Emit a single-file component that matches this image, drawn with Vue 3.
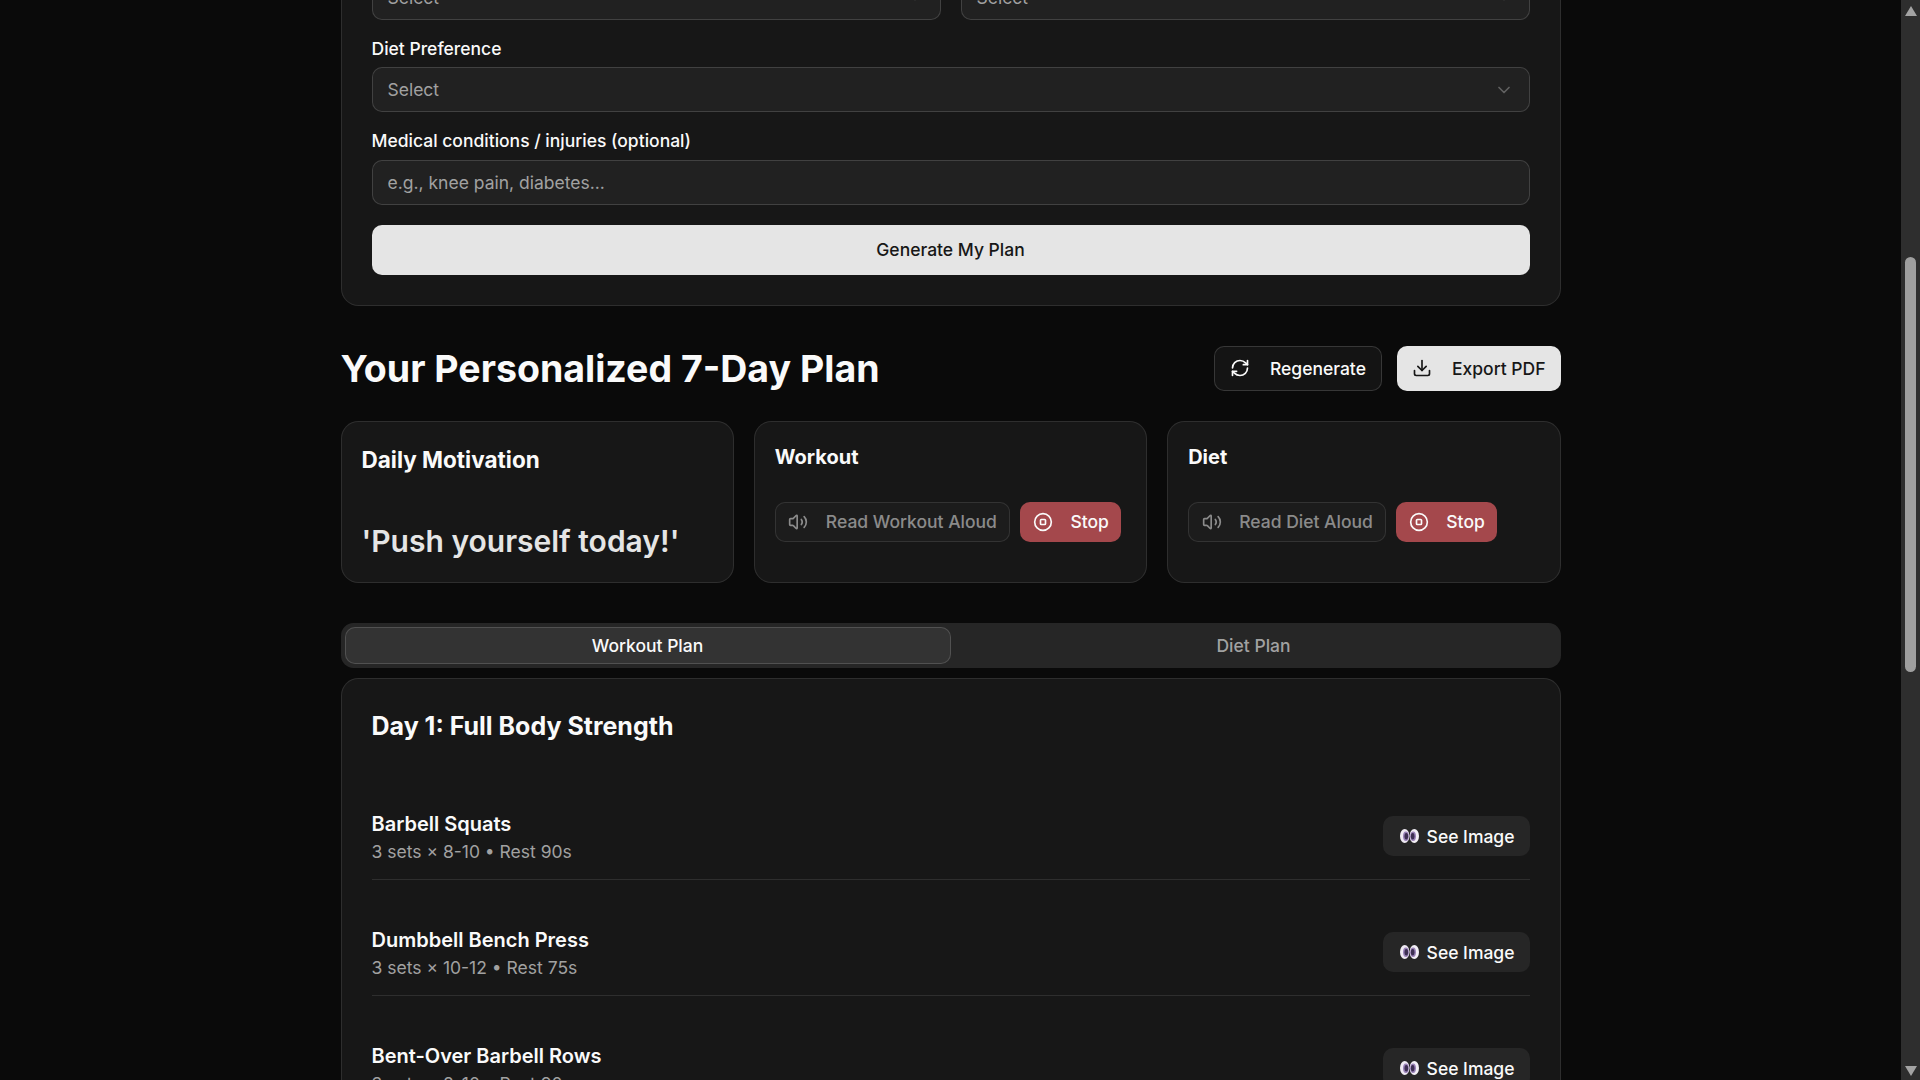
<script setup>
const exercises = [
  { name: 'Barbell Squats', detail: '3 sets × 8-10 • Rest 90s' },
  { name: 'Dumbbell Bench Press', detail: '3 sets × 10-12 • Rest 75s' },
  { name: 'Bent-Over Barbell Rows', detail: '3 sets × 8-10 • Rest 90s' },
]

const speakers = [
  { title: 'Workout', label: 'Read Workout Aloud' },
  { title: 'Diet', label: 'Read Diet Aloud' },
]
</script>

<template>
  <div class="window">
    <main class="page">
      <div class="container">
        <section class="card form-card">
          <div class="form-row">
            <div class="select"><span>Select</span>
              <svg class="chevron" viewBox="0 0 24 24"><path d="m6 9 6 6 6-6" /></svg>
            </div>
            <div class="select"><span>Select</span>
              <svg class="chevron" viewBox="0 0 24 24"><path d="m6 9 6 6 6-6" /></svg>
            </div>
          </div>

          <div class="field">
            <label class="label">Diet Preference</label>
            <div class="select"><span>Select</span>
              <svg class="chevron" viewBox="0 0 24 24"><path d="m6 9 6 6 6-6" /></svg>
            </div>
          </div>

          <div class="field">
            <label class="label">Medical conditions / injuries (optional)</label>
            <input class="input" type="text" placeholder="e.g., knee pain, diabetes..." />
          </div>

          <button class="btn-generate" type="button">Generate My Plan</button>
        </section>

        <div class="plan-head">
          <h1 class="plan-title">Your Personalized 7-Day Plan</h1>
          <div class="plan-actions">
            <button class="btn btn-outline" type="button">
              <svg class="icon" viewBox="0 0 24 24">
                <path d="M3 12a9 9 0 0 1 9-9 9.75 9.75 0 0 1 6.74 2.74L21 8" />
                <path d="M21 3v5h-5" />
                <path d="M21 12a9 9 0 0 1-9 9 9.75 9.75 0 0 1-6.74-2.74L3 16" />
                <path d="M8 16H3v5" />
              </svg>
              Regenerate
            </button>
            <button class="btn btn-primary" type="button">
              <svg class="icon" viewBox="0 0 24 24">
                <path d="M21 15v4a2 2 0 0 1-2 2H5a2 2 0 0 1-2-2v-4" />
                <path d="m7 10 5 5 5-5" />
                <path d="M12 15V3" />
              </svg>
              Export PDF
            </button>
          </div>
        </div>

        <div class="summary">
          <section class="card summary-card">
            <h3 class="motivation-title">Daily Motivation</h3>
            <p class="quote">'Push yourself today!'</p>
          </section>

          <section v-for="item in speakers" :key="item.title" class="card summary-card">
            <h3 class="speak-title">{{ item.title }}</h3>
            <div class="speak-actions">
              <button class="btn-sm btn-read" type="button">
                <svg class="icon" viewBox="0 0 24 24">
                  <path d="M11 4.702a.705.705 0 0 0-1.203-.498L6.413 7.587A1.4 1.4 0 0 1 5.416 8H3a1 1 0 0 0-1 1v6a1 1 0 0 0 1 1h2.416a1.4 1.4 0 0 1 .997.413l3.383 3.384A.705.705 0 0 0 11 19.298z" />
                  <path d="M16 9a5 5 0 0 1 0 6" />
                  <path d="M19.364 18.364a9 9 0 0 0 0-12.728" />
                </svg>
                {{ item.label }}
              </button>
              <button class="btn-sm btn-stop" type="button">
                <svg class="icon" viewBox="0 0 24 24">
                  <circle cx="12" cy="12" r="10" />
                  <rect x="9" y="9" width="6" height="6" rx="1" />
                </svg>
                Stop
              </button>
            </div>
          </section>
        </div>

        <div class="tabs">
          <button class="tab tab-active" type="button">Workout Plan</button>
          <button class="tab" type="button">Diet Plan</button>
        </div>

        <section class="card day-card">
          <h2 class="day-title">Day 1: Full Body Strength</h2>
          <ul class="exercises">
            <li v-for="ex in exercises" :key="ex.name" class="exercise">
              <div>
                <p class="exercise-name">{{ ex.name }}</p>
                <p class="exercise-detail">{{ ex.detail }}</p>
              </div>
              <button class="btn-image" type="button">
                <svg class="eyes" viewBox="0 0 19 14">
                  <ellipse cx="4.7" cy="7" rx="4.7" ry="7" fill="#efeaf3" />
                  <ellipse cx="14.3" cy="7" rx="4.7" ry="7" fill="#f3eff6" />
                  <ellipse cx="5.9" cy="7.2" rx="2.9" ry="4.8" fill="#9a82b8" />
                  <ellipse cx="13.1" cy="7.2" rx="2.9" ry="4.8" fill="#9a82b8" />
                  <ellipse cx="6.3" cy="7.2" rx="1.8" ry="3.2" fill="#3d2f52" />
                  <ellipse cx="12.7" cy="7.2" rx="1.8" ry="3.2" fill="#3d2f52" />
                </svg>
                See Image
              </button>
            </li>
          </ul>
        </section>
      </div>
    </main>

    <aside class="scrollbar">
      <span class="arrow arrow-up"></span>
      <div class="track"><div class="thumb"></div></div>
      <span class="arrow arrow-down"></span>
    </aside>
  </div>
</template>

<style>
html,
body {
  margin: 0;
  height: 100%;
  overflow: hidden;
  background: #0a0a0a;
}
</style>

<style scoped>
* {
  box-sizing: border-box;
}

.window {
  display: flex;
  height: 1080px;
  overflow: hidden;
  font-family: Inter, "Liberation Sans", sans-serif;
  color: #fafafa;
  background: #0a0a0a;
}

.page {
  flex: 1;
  min-width: 0;
  overflow: hidden;
}

/* the page is scrolled down: the top of the form sits above the fold */
.container {
  width: 1220px;
  margin: -56.25px auto 0;
}

.card {
  background: #171717;
  border: 1px solid rgb(255 255 255 / 0.1);
  border-radius: 17.5px;
}

.form-card {
  display: flex;
  flex-direction: column;
  gap: 20px;
  padding: 30px;
}

.form-row {
  display: grid;
  grid-template-columns: 1fr 1fr;
  gap: 20px;
}

.field {
  display: flex;
  flex-direction: column;
  gap: 10px;
}

.label {
  font-size: 17.5px;
  line-height: 17.5px;
  font-weight: 500;
}

.select,
.input {
  height: 45px;
  width: 100%;
  border: 1px solid rgb(255 255 255 / 0.15);
  border-radius: 10px;
  background: rgb(255 255 255 / 0.045);
  font-family: inherit;
  font-size: 17.5px;
  color: #a1a1a1;
}

.select {
  display: flex;
  align-items: center;
  justify-content: space-between;
  padding: 0 15px;
}

.input {
  padding: 0 15px;
  outline: none;
}

.input::placeholder {
  color: #a1a1a1;
}

.chevron {
  width: 20px;
  height: 20px;
  fill: none;
  stroke: #a1a1a1;
  stroke-width: 2;
  stroke-linecap: round;
  stroke-linejoin: round;
  opacity: 0.5;
}

.btn-generate {
  height: 50px;
  border: 0;
  border-radius: 10px;
  background: #e5e5e5;
  color: #171717;
  font-family: inherit;
  font-size: 17.5px;
  font-weight: 500;
}

.plan-head {
  display: flex;
  align-items: center;
  justify-content: space-between;
  margin-top: 40px;
}

.plan-title {
  margin: 0;
  font-size: 37.5px;
  line-height: 45px;
  font-weight: 700;
}

.plan-actions {
  display: flex;
  gap: 15px;
}

.icon {
  width: 20px;
  height: 20px;
  flex: none;
  fill: none;
  stroke: currentColor;
  stroke-width: 2;
  stroke-linecap: round;
  stroke-linejoin: round;
}

.btn {
  display: flex;
  align-items: center;
  gap: 20px;
  height: 45px;
  padding: 0 15px;
  border-radius: 10px;
  font-family: inherit;
  font-size: 17.5px;
  font-weight: 500;
}

.btn-outline {
  border: 1px solid rgb(255 255 255 / 0.15);
  background: rgb(255 255 255 / 0.045);
  color: #fafafa;
}

.btn-primary {
  border: 0;
  background: #e5e5e5;
  color: #171717;
}

.summary {
  display: grid;
  grid-template-columns: repeat(3, 1fr);
  gap: 20px;
  margin-top: 30px;
}

.summary-card {
  padding: 20px;
}

.motivation-title {
  margin: 0 0 41px;
  font-size: 22.5px;
  line-height: 36px;
  font-weight: 700;
}

.quote {
  margin: 0 0 -2px;
  font-size: 30px;
  line-height: 45px;
  font-weight: 600;
  color: #e5e5e5;
}

.speak-title {
  margin: 0 0 30px;
  font-size: 20px;
  line-height: 30px;
  font-weight: 700;
}

.speak-actions {
  display: flex;
  gap: 10px;
}

.btn-sm {
  display: flex;
  align-items: center;
  gap: 17.5px;
  height: 40px;
  padding: 0 12.5px;
  border-radius: 10px;
  font-family: inherit;
  font-size: 17.5px;
  font-weight: 500;
}

.btn-read {
  border: 1px solid rgb(255 255 255 / 0.1);
  background: rgb(255 255 255 / 0.025);
  color: rgb(250 250 250 / 0.5);
}

.btn-stop {
  border: 0;
  background: #a4484c;
  color: #fafafa;
}

.tabs {
  display: grid;
  grid-template-columns: 1fr 1fr;
  height: 45px;
  margin-top: 40px;
  padding: 4px;
  background: #262626;
  border-radius: 12.5px;
}

.tab {
  border: 1px solid transparent;
  border-radius: 10px;
  background: transparent;
  color: #a1a1a1;
  font-family: inherit;
  font-size: 17.5px;
  font-weight: 500;
}

.tab-active {
  border-color: rgb(255 255 255 / 0.15);
  background: #333;
  color: #fafafa;
}

.day-card {
  margin-top: 10px;
  padding: 30px;
}

.day-title {
  margin: 0 0 50px;
  font-size: 25px;
  line-height: 35px;
  font-weight: 700;
}

.exercises {
  display: flex;
  flex-direction: column;
  gap: 30px;
  margin: 0;
  padding: 0;
  list-style: none;
}

.exercise {
  display: flex;
  align-items: center;
  justify-content: space-between;
  padding: 15px 0;
  border-bottom: 1px solid rgb(255 255 255 / 0.1);
}

.exercise-name {
  margin: 0;
  font-size: 20px;
  line-height: 30px;
  font-weight: 600;
}

.exercise-detail {
  margin: 0;
  font-size: 17.5px;
  line-height: 25px;
  color: #a1a1a1;
}

.btn-image {
  display: flex;
  align-items: center;
  gap: 7.5px;
  height: 40px;
  padding: 0 15px;
  border: 0;
  border-radius: 10px;
  background: #262626;
  color: #fafafa;
  font-family: inherit;
  font-size: 17.5px;
  font-weight: 500;
}

.eyes {
  width: 19px;
  height: 14px;
  margin-left: 2.5px;
}

.scrollbar {
  flex: none;
  display: flex;
  flex-direction: column;
  width: 19px;
  background: #2e2e2e;
}

.track {
  flex: 1;
  padding-top: 238px;
}

.thumb {
  width: 11px;
  height: 415px;
  margin: 0 auto;
  border-radius: 6px;
  background: #9f9f9f;
}

.arrow {
  height: 19px;
  display: flex;
  align-items: center;
  justify-content: center;
}

.arrow::before {
  content: '';
  border-left: 6.5px solid transparent;
  border-right: 6.5px solid transparent;
}

.arrow-up {
  padding-top: 3px;
}

.arrow-up::before {
  border-bottom: 10px solid #a3a3a3;
}

.arrow-down::before {
  border-top: 10px solid #a3a3a3;
}
</style>
